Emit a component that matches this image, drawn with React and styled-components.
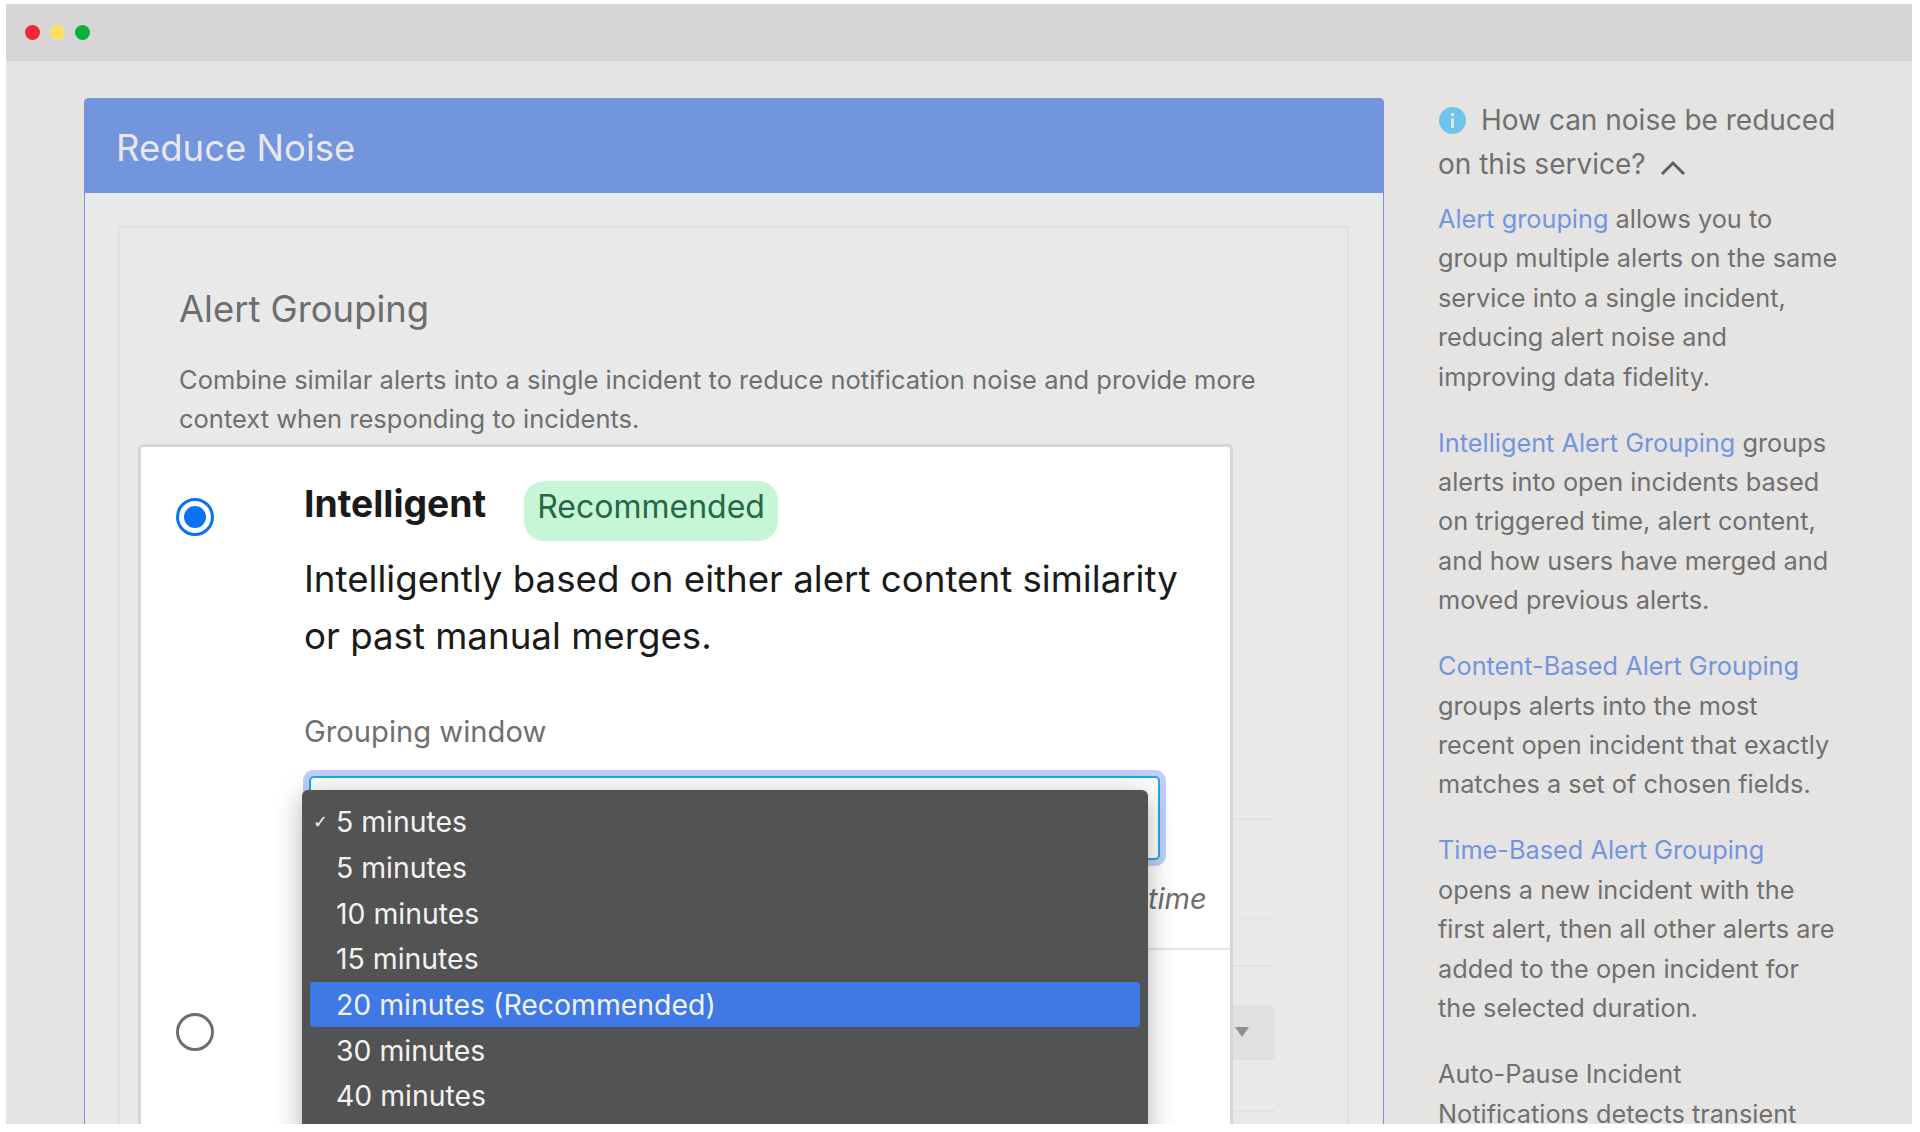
import React from 'react'
import styled, { createGlobalStyle } from 'styled-components'

const GlobalStyle = createGlobalStyle`
  html, body {
    margin: 0;
    background: #fff;
    font-family: Inter, "Liberation Sans", sans-serif;
  }
  * {
    box-sizing: border-box;
  }
`

const Page = styled.div`
  height: 1132px;
  padding: 4px 8px 8px 6px;
  overflow: hidden;
`

const Window = styled.div`
  display: flex;
  flex-direction: column;
  height: 100%;
  background: #e5e4e3;
  overflow: hidden;
`

const TitleBar = styled.div`
  display: flex;
  flex: none;
  align-items: center;
  gap: 10px;
  height: 57px;
  padding: 0 0 1px 19px;
  background: #d6d6d6;
`

const Dot = styled.span`
  width: 15px;
  height: 15px;
  border-radius: 50%;
  background: ${p => p.$color};
`

const Content = styled.div`
  display: flex;
  flex: 1;
  min-height: 0;
  padding: 37px 0 0 78px;
`

const Panel = styled.section`
  display: flex;
  flex: none;
  flex-direction: column;
  width: 1300px;
  height: 1200px;
  background: #e9e9ea;
  border: 1px solid #7395de;
  border-radius: 4px 4px 0 0;
`

const PanelHeader = styled.h1`
  flex: none;
  height: 94px;
  margin: 0;
  padding-left: 31px;
  background: #7395de;
  color: #e8e8e8;
  font-size: 36.5px;
  font-weight: 400;
  line-height: 98px;
`

const InnerCard = styled.div`
  flex: 1;
  margin: 33px 34px 0 33px;
  padding: 55px 60px 0 59px;
  border: 2px solid #e0e0e4;
`

const SectionTitle = styled.h2`
  margin: 0;
  color: #6d6d6d;
  font-size: 36.4px;
  font-weight: 400;
  line-height: 52px;
`

const Intro = styled.p`
  margin: 25px 0 0;
  color: #6f6f6f;
  font-size: 25.5px;
  line-height: 39.4px;
`

const Stack = styled.div`
  position: relative;
  margin: 5px 12px 0 -41px;
`

const BackRow = styled.div`
  height: ${p => p.$height}px;
  padding-top: ${p => p.$pad || 0}px;
  border-bottom: 2px solid #e2e2e3;
`

const BackField = styled.div`
  display: flex;
  align-items: center;
  justify-content: flex-end;
  height: ${p => p.$height}px;
  padding-right: 24px;
  background: ${p => (p.$filled ? '#e0e0e0' : 'transparent')};
  border: 2px solid ${p => (p.$filled ? '#e0e0e0' : '#e6e6e7')};
  border-radius: 5px;
`

const Caret = styled.span`
  width: 0;
  height: 0;
  border-top: 10px solid #8f8f8f;
  border-left: 7.5px solid transparent;
  border-right: 7.5px solid transparent;
`

const Highlight = styled.div`
  position: absolute;
  top: 0;
  left: 0;
  width: 1095px;
  height: 700px;
  background: #fff;
  border: 3px solid #d6d6d6;
  border-radius: 5px;
  overflow: hidden;
`

const Option = styled.div`
  display: grid;
  grid-template-columns: 163px 1fr;
  height: ${p => p.$height}px;
`

const RadioCell = styled.div`
  padding: ${p => p.$top}px 0 0 35px;
`

const Radio = styled.span`
  display: block;
  width: 38px;
  height: 38px;
  padding: 5px;
  background-clip: content-box;
  background-color: ${p => (p.$checked ? '#0b72f6' : 'transparent')};
  border: ${p => (p.$checked ? '3px solid #0b72f6' : '3px solid #6e6e6e')};
  border-radius: 50%;
`

const OptionBody = styled.div`
  min-width: 0;
  padding-top: 34px;
  border-bottom: 2px solid #e6e6e6;
`

const OptionHead = styled.div`
  display: flex;
  align-items: flex-start;
`

const OptionTitle = styled.strong`
  color: #1a1a1a;
  font-size: 37.3px;
  font-weight: 700;
  line-height: 46px;
`

const Badge = styled.span`
  height: 60px;
  margin-left: 38px;
  padding: 0 13px;
  background: #c6f6d5;
  border-radius: 20px;
  color: #276749;
  font-size: 32px;
  line-height: 52px;
`

const Description = styled.p`
  max-width: 900px;
  margin: 9px 0 0;
  color: #1a1a1a;
  font-size: 36.7px;
  line-height: 57px;
`

const FieldLabel = styled.div`
  margin-top: 48px;
  color: #6f6f6f;
  font-size: 29.2px;
  line-height: 39px;
`

const Select = styled.div`
  position: relative;
  width: 851px;
  height: 84px;
  margin: 25px 0 0 5px;
  background: #fff;
  border: 2px solid #1fa8e8;
  border-radius: 5px;
  box-shadow: 0 0 0 6px #c0cef8;
`

const Menu = styled.ul`
  position: absolute;
  top: 12px;
  left: -9px;
  z-index: 2;
  width: 846px;
  margin: 0;
  padding: 9px 8px 40px;
  list-style: none;
  background: #525352;
  border-radius: 6px;
  box-shadow: 0 6px 28px rgba(0, 0, 0, 0.3);
`

const MenuItem = styled.li`
  display: flex;
  align-items: center;
  height: 45.7px;
  color: #f2f2f2;
  font-size: 28.4px;
  background: ${p => (p.$active ? '#3e79e5' : 'transparent')};
  border-radius: 3px;
`

const Tick = styled.span`
  flex: none;
  width: 26px;
  padding-left: 3px;
  font-family: "DejaVu Sans", sans-serif;
  font-size: 18px;
`

const Note = styled.div`
  margin-top: 19px;
  color: #6d6d6d;
  font-size: 29px;
  font-style: italic;
  line-height: 39px;
  white-space: nowrap;
`

const Sidebar = styled.aside`
  flex: none;
  width: 401px;
  margin: 0 0 0 54px;
  color: #707070;
`

const HelpTitle = styled.div`
  margin-bottom: 13px;
  font-size: 28px;
  line-height: 44px;
`

const InfoIcon = styled.svg`
  width: 27px;
  height: 27px;
  margin: 0 15px 0 1px;
  vertical-align: -4px;
`

const Chevron = styled.svg`
  width: 26px;
  height: 16px;
  margin-left: 14px;
  vertical-align: -2px;
`

const HelpText = styled.p`
  margin: 0 0 26.6px;
  font-size: 25.3px;
  line-height: 39.4px;

  a {
    color: #7395de;
    text-decoration: none;
  }
`

const minutes = [
  '5 minutes',
  '10 minutes',
  '15 minutes',
  '20 minutes (Recommended)',
  '30 minutes',
  '40 minutes',
]

const App = () => (
  <>
    <GlobalStyle />
    <Page>
      <Window>
        <TitleBar>
          <Dot $color="#f5263a" />
          <Dot $color="#ffe15f" />
          <Dot $color="#0ab13c" />
        </TitleBar>
        <Content>
          <Panel>
            <PanelHeader>Reduce Noise</PanelHeader>
            <InnerCard>
              <SectionTitle>Alert Grouping</SectionTitle>
              <Intro>
                Combine similar alerts into a single incident to reduce notification noise and
                provide more context when responding to incidents.
              </Intro>
              <Stack>
                <BackRow $height={376} />
                <BackRow $height={147} $pad={33}>
                  <BackField $height={67} />
                </BackRow>
                <BackRow $height={145} $pad={38}>
                  <BackField $height={55} $filled>
                    <Caret />
                  </BackField>
                </BackRow>
                <Highlight>
                  <Option $height={503}>
                    <RadioCell $top={51}>
                      <Radio $checked />
                    </RadioCell>
                    <OptionBody>
                      <OptionHead>
                        <OptionTitle>Intelligent</OptionTitle>
                        <Badge>Recommended</Badge>
                      </OptionHead>
                      <Description>
                        Intelligently based on either alert content similarity or past manual
                        merges.
                      </Description>
                      <FieldLabel>Grouping window</FieldLabel>
                      <Select>
                        <Menu>
                          <MenuItem>
                            <Tick>✓</Tick>5 minutes
                          </MenuItem>
                          {minutes.map(label => (
                            <MenuItem key={label} $active={label.includes('Recommended')}>
                              <Tick />
                              {label}
                            </MenuItem>
                          ))}
                        </Menu>
                      </Select>
                      <Note>Alerts will be grouped into one incident based on their arrival time</Note>
                    </OptionBody>
                  </Option>
                  <Option $height={200}>
                    <RadioCell $top={63}>
                      <Radio />
                    </RadioCell>
                  </Option>
                </Highlight>
              </Stack>
            </InnerCard>
          </Panel>
          <Sidebar>
            <HelpTitle>
              <InfoIcon viewBox="0 0 27 27">
                <circle cx="13.5" cy="13.5" r="13.5" fill="#6ec4ea" />
                <circle cx="13.5" cy="7.5" r="1.8" fill="#e5e4e3" />
                <rect x="12" y="11.5" width="3" height="9.5" fill="#e5e4e3" />
              </InfoIcon>
              How can noise be reduced on this service?
              <Chevron viewBox="0 0 26 16">
                <path d="M2 14 13 3l11 11" fill="none" stroke="#5f5f5f" strokeWidth="3" />
              </Chevron>
            </HelpTitle>
            <HelpText>
              <a href="#alert-grouping">Alert grouping</a> allows you to group multiple alerts on
              the same service into a single incident, reducing alert noise and improving data
              fidelity.
            </HelpText>
            <HelpText>
              <a href="#intelligent">Intelligent Alert Grouping</a> groups alerts into open
              incidents based on triggered time, alert content, and how users have merged and moved
              previous alerts.
            </HelpText>
            <HelpText>
              <a href="#content-based">Content-Based Alert Grouping</a> groups alerts into the most
              recent open incident that exactly matches a set of chosen fields.
            </HelpText>
            <HelpText>
              <a href="#time-based">Time-Based Alert Grouping</a> opens a new incident with the
              first alert, then all other alerts are added to the open incident for the selected
              duration.
            </HelpText>
            <HelpText>Auto-Pause Incident Notifications detects transient</HelpText>
          </Sidebar>
        </Content>
      </Window>
    </Page>
  </>
)

export default App
